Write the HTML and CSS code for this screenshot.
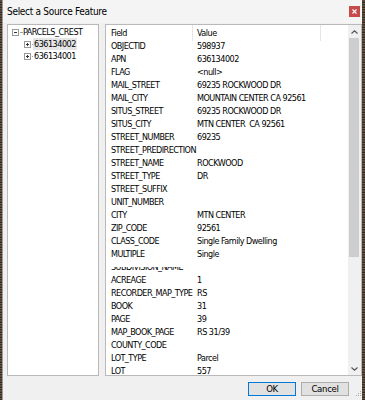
FILE: index.html
```html
<!DOCTYPE html>
<html lang="en">
<head>
  <meta charset="UTF-8">
  <title>Select a Source Feature</title>
  <link rel="stylesheet" href="styles.css">
</head>
<body>
  <div class="dialog">
    <div class="titlebar">
      <span class="title">Select a Source Feature</span>
      <span class="close">
        <svg width="5" height="5" viewBox="0 0 5 5"><path d="M0.5 0.5L4.5 4.5M4.5 0.5L0.5 4.5" stroke="#fff" stroke-width="1.2"/></svg>
      </span>
    </div>

    <div class="main">
      <div class="tree">
        <div class="node">
          <svg class="box" width="7" height="7" viewBox="0 0 7 7"><rect x="0.5" y="0.5" width="6" height="6" fill="#fff" stroke="#9a9a9a"/><path d="M2 3.5H5" stroke="#333"/></svg>
          <span class="dash"></span>
          <span class="label">PARCELS_CREST</span>
        </div>
        <div class="node child">
          <svg class="box" width="7" height="7" viewBox="0 0 7 7"><rect x="0.5" y="0.5" width="6" height="6" fill="#fff" stroke="#9a9a9a"/><path d="M2 3.5H5M3.5 2V5" stroke="#333"/></svg>
          <span class="dash short"></span>
          <span class="label selected">636134002</span>
        </div>
        <div class="node child">
          <svg class="box" width="7" height="7" viewBox="0 0 7 7"><rect x="0.5" y="0.5" width="6" height="6" fill="#fff" stroke="#9a9a9a"/><path d="M2 3.5H5M3.5 2V5" stroke="#333"/></svg>
          <span class="dash short"></span>
          <span class="label">636134001</span>
        </div>
      </div>

      <div class="grid">
        <div class="table">
          <div class="head"><span>Field</span><span>Value</span><span></span></div>
          <div class="row"><span>OBJECTID</span><span>598937</span></div>
          <div class="row"><span>APN</span><span>636134002</span></div>
          <div class="row"><span>FLAG</span><span>&lt;null&gt;</span></div>
          <div class="row"><span>MAIL_STREET</span><span>69235 ROCKWOOD DR</span></div>
          <div class="row"><span>MAIL_CITY</span><span>MOUNTAIN CENTER CA 92561</span></div>
          <div class="row"><span>SITUS_STREET</span><span>69235 ROCKWOOD DR</span></div>
          <div class="row"><span>SITUS_CITY</span><span>MTN CENTER&nbsp; CA 92561</span></div>
          <div class="row"><span>STREET_NUMBER</span><span>69235</span></div>
          <div class="row"><span>STREET_PREDIRECTION</span><span></span></div>
          <div class="row"><span>STREET_NAME</span><span>ROCKWOOD</span></div>
          <div class="row"><span>STREET_TYPE</span><span>DR</span></div>
          <div class="row"><span>STREET_SUFFIX</span><span></span></div>
          <div class="row"><span>UNIT_NUMBER</span><span></span></div>
          <div class="row"><span>CITY</span><span>MTN CENTER</span></div>
          <div class="row"><span>ZIP_CODE</span><span>92561</span></div>
          <div class="row"><span>CLASS_CODE</span><span>Single Family Dwelling</span></div>
          <div class="row"><span>MULTIPLE</span><span>Single</span></div>
          <div class="row cut"><span>SUBDIVISION_NAME</span><span></span></div>
          <div class="row"><span>ACREAGE</span><span>1</span></div>
          <div class="row"><span>RECORDER_MAP_TYPE</span><span>RS</span></div>
          <div class="row"><span>BOOK</span><span>31</span></div>
          <div class="row"><span>PAGE</span><span>39</span></div>
          <div class="row"><span>MAP_BOOK_PAGE</span><span>RS 31/39</span></div>
          <div class="row"><span>COUNTY_CODE</span><span></span></div>
          <div class="row"><span>LOT_TYPE</span><span>Parcel</span></div>
          <div class="row"><span>LOT</span><span>557</span></div>
        </div>
        <div class="scroll">
          <div class="arrow">
            <svg width="7" height="4" viewBox="0 0 7 4"><path d="M0.5 3.5L3.5 0.8L6.5 3.5" fill="none" stroke="#555" stroke-width="1.2"/></svg>
          </div>
          <div class="track"><div class="thumb"></div></div>
          <div class="arrow down">
            <svg width="7" height="4" viewBox="0 0 7 4"><path d="M0.5 0.5L3.5 3.2L6.5 0.5" fill="none" stroke="#555" stroke-width="1.2"/></svg>
          </div>
        </div>
      </div>
    </div>

    <div class="footer">
      <button class="btn default">OK</button>
      <button class="btn">Cancel</button>
      <svg class="grip" width="7" height="7" viewBox="0 0 7 7">
        <rect x="5" y="0" width="1" height="1" fill="#aaa"/>
        <rect x="3" y="2" width="1" height="1" fill="#aaa"/>
        <rect x="5" y="2" width="1" height="1" fill="#aaa"/>
        <rect x="1" y="4" width="1" height="1" fill="#aaa"/>
        <rect x="3" y="4" width="1" height="1" fill="#aaa"/>
        <rect x="5" y="4" width="1" height="1" fill="#aaa"/>
      </svg>
    </div>
  </div>
</body>
</html>
```

FILE: styles.css
```css
* {
  box-sizing: border-box;
}

body {
  margin: 0;
  width: 365px;
  height: 400px;
  overflow: hidden;
  background: #4a3c2d;
  background-image: repeating-linear-gradient(0deg, #3a2f24 0 1px, #6d5b45 1px 2px, #2f271e 2px 3px, #5a4a39 3px 5px);
  font-family: "DejaVu Sans Condensed", "Liberation Sans", sans-serif;
  font-size: 9px;
  letter-spacing: -0.5px;
  color: #000;
}

.dialog {
  margin-left: 2px;
  width: 360px;
  height: 400px;
  background: #f0f0f0;
  border-left: 1px solid #9b9b9b;
  display: flex;
  flex-direction: column;
}

.titlebar {
  height: 23px;
  flex: none;
  display: flex;
  align-items: center;
  padding-left: 4px;
  background: #f4f4f4;
}

.title {
  font-size: 10px;
  letter-spacing: -0.3px;
}

.close {
  margin-left: auto;
  margin-right: 2px;
  width: 11px;
  height: 11px;
  background: #c94a4a;
  display: flex;
  align-items: center;
  justify-content: center;
}

.main {
  height: 353px;
  flex: none;
  display: flex;
  gap: 6px;
  padding-left: 4px;
  padding-top: 1px;
}

.tree {
  width: 92px;
  background: #fff;
  border: 1px solid #b9b9b9;
  padding-top: 1px;
  padding-left: 4px;
}

.node {
  height: 12px;
  display: flex;
  align-items: center;
}

.node.child {
  padding-left: 12px;
}

.box {
  flex: none;
}

.dash {
  width: 2px;
  border-top: 1px dotted #a0a0a0;
  margin-left: 1px;
}

.dash.short {
  width: 1px;
}

.label {
  padding: 0 1px;
  line-height: 12px;
}

.label.selected {
  background: #e5e5e5;
}

.grid {
  flex: 1;
  display: flex;
  background: #fff;
  border: 1px solid #b9b9b9;
  overflow: hidden;
}

.table {
  flex: 1;
  overflow: hidden;
}

.head,
.row {
  display: grid;
  grid-template-columns: 87px 128px 1fr;
}

.head {
  height: 15px;
  line-height: 16px;
}

.head span {
  border-right: 1px solid #e5e5e5;
}

.head span:last-child {
  border-right: none;
}

.head span,
.row span {
  padding-left: 4px;
  white-space: nowrap;
}

.head span:first-child,
.row span:first-child {
  padding-left: 5px;
  letter-spacing: -0.55px;
}

.row {
  height: 13px;
  line-height: 13px;
}

.row.cut {
  clip-path: inset(6px 0 0 0);
}

.scroll {
  width: 13px;
  background: #f0f0f0;
  display: flex;
  flex-direction: column;
}

.arrow {
  height: 13px;
  display: flex;
  align-items: center;
  justify-content: center;
}

.track {
  flex: 1;
}

.thumb {
  height: 219px;
  margin: 0 2px 0 1px;
  background: #cdcdcd;
}

.footer {
  flex: 1;
  display: flex;
  justify-content: flex-end;
  align-items: flex-start;
  gap: 5px;
  padding-top: 6px;
}

.btn {
  width: 48px;
  height: 14px;
  padding: 0;
  font-family: inherit;
  font-size: 9.5px;
  letter-spacing: -0.3px;
  line-height: 12px;
  color: #000;
  background: #e1e1e1;
  border: 1px solid #adadad;
}

.btn.default {
  border-color: #0078d7;
}

.grip {
  align-self: flex-end;
  margin: 0 0 2px 1px;
}
```
